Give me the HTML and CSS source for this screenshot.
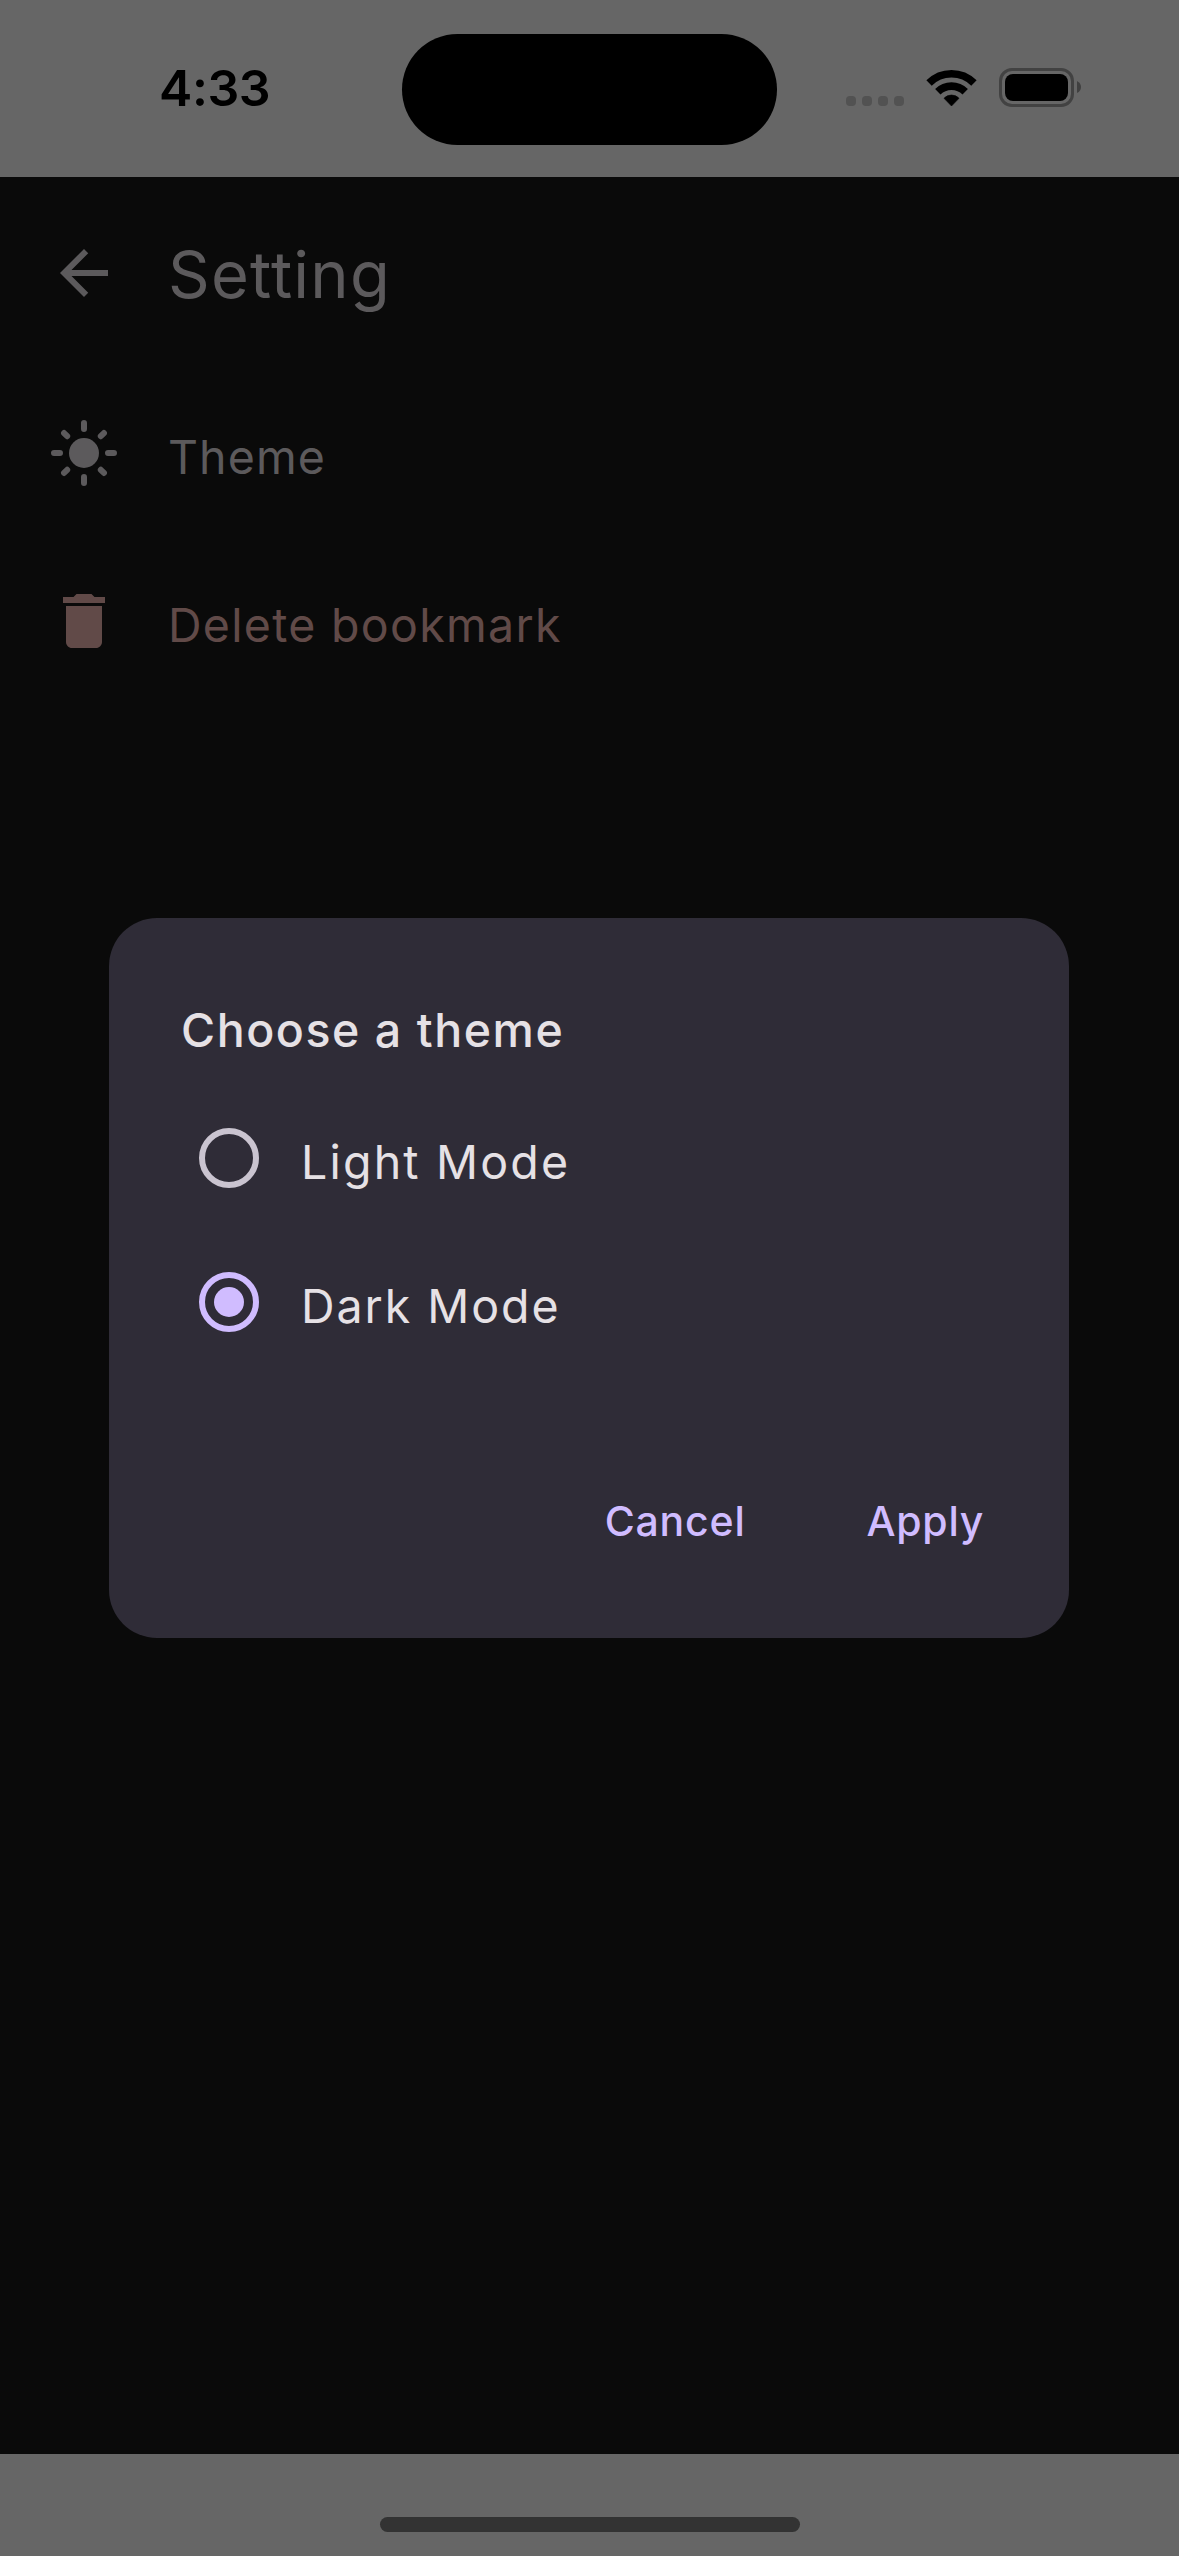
FILE: index.html
```html
<!DOCTYPE html>
<html lang="en">
<head>
<meta charset="utf-8">
<title>Setting</title>
<link rel="stylesheet" href="styles.css">
</head>
<body>
<div class="screen">
  <div class="status-bar">
    <div class="time">4:33</div>
    <div class="island"></div>
    <div class="indicators">
      <div class="signal"><i></i><i></i><i></i><i></i></div>
      <svg class="wifi" viewBox="0 0 51 38">
        <path d="M3.05 14.05A31.8 31.8 0 0 1 47.95 14.05M11.8 22.8A19.4 19.4 0 0 1 39.2 22.8" fill="none" stroke="#000" stroke-width="7.6"/>
        <path d="M25.5 37 18 29.3Q21 26 25.5 26T33 29.3Z" stroke="#000" stroke-width=".6" stroke-linejoin="round"/>
      </svg>
      <svg class="battery" viewBox="0 0 82 39">
        <rect x="1.5" y="1.5" width="72" height="36" rx="11.5" fill="none" stroke="#424242" stroke-width="3"/>
        <rect x="6" y="6" width="63" height="27" rx="8"/>
        <path d="M78 13Q82 15 82 19T78 25Z" fill="#404040"/>
      </svg>
    </div>
  </div>

  <main class="page">
    <header class="app-bar">
      <svg class="icon" viewBox="0 0 24 24"><path d="M20 11H7.83l5.59-5.59L12 4l-8 8 8 8 1.41-1.41L7.83 13H20v-2z"/></svg>
      <h1 class="page-title">Setting</h1>
    </header>
    <div class="row">
      <svg class="icon" viewBox="0 0 24 24">
        <circle cx="12" cy="12" r="5"/>
        <path d="M2 12h2M20 12h2M12 2v2M12 20v2M5.35 5.35l1.05 1.05M17.6 17.6l1.05 1.05M18.65 5.35L17.6 6.4M6.4 17.6l-1.05 1.05" fill="none" stroke="currentColor" stroke-width="2" stroke-linecap="round"/>
      </svg>
      <span class="row-label label-theme">Theme</span>
    </div>
    <div class="row row-danger">
      <svg class="icon" viewBox="0 0 24 24"><path d="M6 19c0 1.1.9 2 2 2h8c1.1 0 2-.9 2-2V7H6v12zM19 4h-3.5l-1-1h-5l-1 1H5v2h14V4z"/></svg>
      <span class="row-label label-delete">Delete bookmark</span>
    </div>

    <section class="dialog">
      <h2 class="dialog-title">Choose a theme</h2>
      <div class="option">
        <span class="radio"></span>
        <span class="option-label label-light">Light Mode</span>
      </div>
      <div class="option">
        <span class="radio radio-checked"></span>
        <span class="option-label label-dark">Dark Mode</span>
      </div>
      <div class="actions">
        <span class="action-cancel">Cancel</span>
        <span class="action-apply">Apply</span>
      </div>
    </section>
  </main>

  <div class="nav-bar"><div class="home-indicator"></div></div>
</div>
</body>
</html>
```

FILE: styles.css
```css
* { box-sizing: border-box; margin: 0; }

body {
  background: #0a0a0a;
  font-family: Inter, "Liberation Sans", sans-serif;
}

.screen {
  display: flex;
  flex-direction: column;
  width: 1179px;
  height: 2556px;
}

.status-bar {
  display: flex;
  align-items: flex-start;
  height: 177px;
  padding: 33px 98px 0 159px;
  background: #666;
}

.time {
  width: 243px;
  padding-top: 18px;
  font-size: 50px;
  font-weight: 600;
  line-height: 74px;
  letter-spacing: -0.4px;
  color: #000;
}

.island {
  width: 375px;
  height: 111px;
  margin-top: 1px;
  border-radius: 56px;
  background: #000;
}

.indicators {
  display: flex;
  align-items: flex-start;
  margin-left: auto;
  padding-top: 35px;
}

.signal { display: flex; gap: 6px; margin: 28px 22px 0 0; }
.signal i { width: 10px; height: 10px; border-radius: 4px; background: #525252; }
.wifi { width: 51px; height: 38px; margin: 1px 22px 0 0; }
.battery { width: 82px; height: 39px; }

.page {
  flex: 1;
  display: flex;
  flex-direction: column;
  background: #0a0a0a;
  color: #5c5a5c;
}

.app-bar,
.row {
  display: flex;
  align-items: center;
  gap: 48px;
  padding-left: 48px;
}

.app-bar { height: 192px; }
.row { height: 168px; }
.row-danger { color: #614a48; }

.icon { width: 72px; height: 72px; fill: currentColor; }

.page-title {
  padding-top: 3px;
  font-size: 65px;
  font-weight: 400;
  line-height: 84px;
  letter-spacing: 1.2px;
}

.row-label {
  padding-top: 8px;
  font-size: 46.5px;
  line-height: 72px;
}

.label-theme { letter-spacing: 1.1px; }
.label-delete { letter-spacing: 1.3px; }

.dialog {
  display: flex;
  flex-direction: column;
  width: 960px;
  height: 720px;
  margin: 213px 0 0 109px;
  padding: 72px 85px 0 72px;
  border-radius: 48px;
  background: #2f2c37;
  color: #e6e1e5;
}

.dialog-title {
  height: 96px;
  padding-top: 4px;
  font-size: 46.5px;
  font-weight: 500;
  line-height: 72px;
  letter-spacing: 1.55px;
}

.option {
  display: flex;
  align-items: center;
  height: 144px;
}

.radio {
  display: grid;
  place-items: center;
  width: 60px;
  height: 60px;
  margin: 0 42px 0 18px;
  border: 6px solid #cac4d0;
  border-radius: 50%;
}

.radio-checked { border-color: #d0bcff; }

.radio-checked::after {
  content: "";
  width: 30px;
  height: 30px;
  border-radius: 50%;
  background: #d0bcff;
}

.option-label {
  padding-top: 8px;
  font-size: 46.5px;
  line-height: 72px;
}

.label-light { letter-spacing: 2.2px; }
.label-dark { letter-spacing: 1.95px; }

.actions {
  display: flex;
  justify-content: flex-end;
  gap: 121px;
  margin-top: 117px;
  font-size: 41px;
  font-weight: 500;
  line-height: 60px;
  color: #d0bcff;
}

.action-cancel { letter-spacing: 0.8px; }
.action-apply { letter-spacing: 0.7px; }

.nav-bar {
  display: flex;
  justify-content: center;
  height: 102px;
  padding-top: 63px;
  background: #666;
}

.home-indicator {
  width: 420px;
  height: 15px;
  border-radius: 8px;
  background: #333;
}
```
